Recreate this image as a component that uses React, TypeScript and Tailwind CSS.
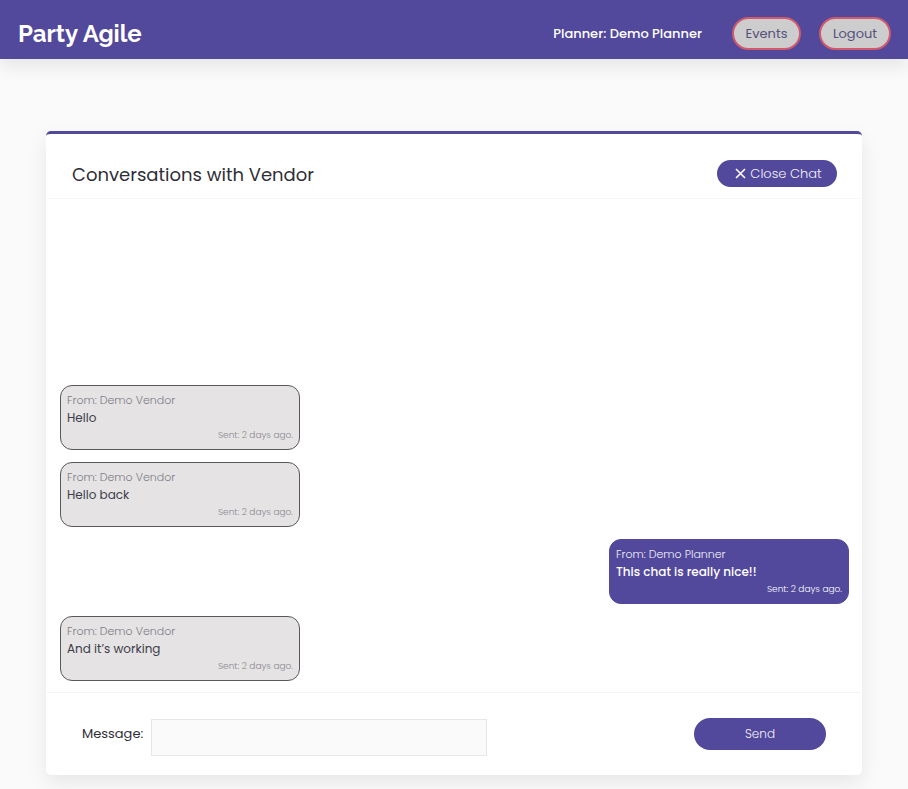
import { useState } from "react";

type Message = { id: number; from: string; text: string; sent: string; mine: boolean };

const messages: Message[] = [
  { id: 1, from: "Demo Vendor", text: "Hello", sent: "2 days ago.", mine: false },
  { id: 2, from: "Demo Vendor", text: "Hello back", sent: "2 days ago.", mine: false },
  { id: 3, from: "Demo Planner", text: "This chat is really nice!!", sent: "2 days ago.", mine: true },
  { id: 4, from: "Demo Vendor", text: "And it’s working", sent: "2 days ago.", mine: false },
];

function Bubble({ message }: { message: Message }) {
  return (
    <li
      className={
        "flex h-[65px] w-60 flex-col rounded-xl border px-[6px] pt-[6px] " +
        (message.mine
          ? "self-end border-[#52489c] bg-[#52489c] text-white"
          : "self-start border-[#59585d] bg-[#e5e3e4] text-[#3d3d48]")
      }
    >
      <p className={"text-[11px] leading-[17px] font-light " + (message.mine ? "text-[#f3f2f9]" : "text-[#7d7c85]")}>
        From: {message.from}
      </p>
      <p className={"text-xs leading-[17px] " + (message.mine ? "font-medium" : "font-normal")}>{message.text}</p>
      <p
        className={
          "text-right text-[9px] leading-[18px] font-light " + (message.mine ? "text-white" : "text-[#8a888f]")
        }
      >
        Sent: {message.sent}
      </p>
    </li>
  );
}

export default function App() {
  const [draft, setDraft] = useState("");

  return (
    <div className="min-h-screen bg-[#fafafa] pb-[14px] font-[Poppins,Inter,sans-serif] text-[#2f2e36]">
      <header className="flex h-[59px] items-center justify-between bg-[#52489c] pt-2 pr-[17px] pl-[18px] shadow-[0_8px_16px_rgba(0,0,0,0.08)]">
        <h1 className="font-[Raleway,Lato,sans-serif] text-2xl leading-[30px] font-bold text-white">Party Agile</h1>
        <nav className="flex items-center text-[13px]">
          <span className="mr-[30px] font-medium text-white">Planner: Demo Planner</span>
          <a
            href="#events"
            className="mr-[18px] flex h-[33px] w-[69px] items-center justify-center rounded-full border-2 border-[#d0596b] bg-[#cdcdcd] text-[#54507c]"
          >
            Events
          </a>
          <button
            type="button"
            className="flex h-[33px] w-[72px] items-center justify-center rounded-full border-2 border-[#d0596b] bg-[#cdcdcd] text-[#54507c]"
          >
            Logout
          </button>
        </nav>
      </header>

      <main className="mx-[46px] mt-[72px] rounded-[5px] border-t-[3px] border-[#52489c] bg-white shadow-[0_8px_20px_rgba(0,0,0,0.08)]">
        <div className="mx-px flex h-[65px] items-center justify-between border-b border-[#f4f8fb] pt-[14px] pr-6 pl-[25px]">
          <h2 className="pt-1 text-lg leading-7 font-normal">Conversations with Vendor</h2>
          <button
            type="button"
            className="flex h-[27px] w-[120px] items-center justify-center gap-1 rounded-full bg-[#52489c] pt-px pl-[3px] text-[13px] font-light text-[#f3f2f9]"
          >
            <svg viewBox="0 0 11 11" className="size-[11px]" aria-hidden="true">
              <path d="M1 1 10 10M10 1 1 10" stroke="white" strokeWidth="1.6" fill="none" />
            </svg>
            Close Chat
          </button>
        </div>

        <ul className="mx-px flex min-h-[494px] flex-col justify-end gap-3 border-b border-[#f0f5f9] pr-3 pb-[11px] pl-[13px]">
          {messages.map((message) => (
            <Bubble key={message.id} message={message} />
          ))}
        </ul>

        <form
          className="flex h-[82px] items-center pr-9 pl-9"
          onSubmit={(event) => {
            event.preventDefault();
            setDraft("");
          }}
        >
          <label htmlFor="message" className="w-[69px] text-[13px] font-normal">
            Message:
          </label>
          <input
            id="message"
            type="text"
            value={draft}
            onChange={(event) => setDraft(event.target.value)}
            className="mt-[7px] h-[37px] w-[336px] border border-[#e6e6e6] bg-[#fafafa] px-2 text-[13px] outline-none"
          />
          <button
            type="submit"
            className="ml-auto h-8 w-[132px] rounded-full bg-[#52489c] text-xs font-light text-[#f3f2f9]"
          >
            Send
          </button>
        </form>
      </main>
    </div>
  );
}
